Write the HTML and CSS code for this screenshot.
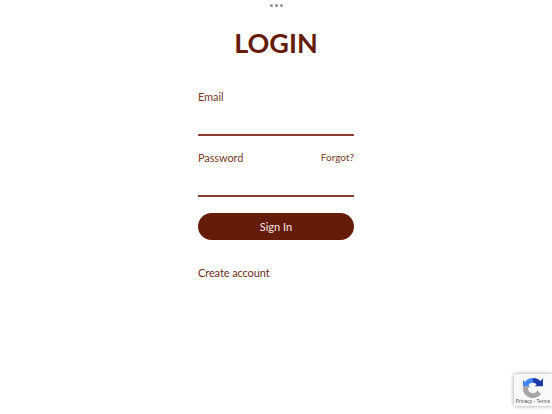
FILE: index.html
```html
<!DOCTYPE html>
<html lang="en">
<head>
<meta charset="utf-8">
<title>Login</title>
<link rel="stylesheet" href="styles.css">
</head>
<body>
<div class="dots"><span></span><span></span><span></span></div>
<main class="login">
  <h1 class="title">LOGIN</h1>
  <form class="form">
    <div class="field">
      <label class="label">Email</label>
      <div class="input"></div>
    </div>
    <div class="field field-second">
      <div class="label-row"><label class="label">Password</label><a class="forgot">Forgot?</a></div>
      <div class="input input-second"></div>
    </div>
    <div class="button">Sign In</div>
    <a class="create">Create account</a>
  </form>
</main>
<aside class="badge">
  <svg class="badge-logo" viewBox="0 0 24 24" width="20" height="20">
    <path fill="#a6a6a6" d="M0 10 L0 12.5 C0 19 5.3 24 12 24 C16 24 19.5 22.2 21.6 19.3 L17.2 14.6 C16.2 16.8 14.4 18.2 12 18.2 C8.8 18.2 6 15.6 6 12.5 L8.6 10 Z"/>
    <path fill="#4285f4" d="M12 0 C8 0 4.5 1.9 2.3 4.8 L0 2.5 L0 10 L7.7 10 L6.6 8.5 C7.6 6.8 9.5 5.8 12 5.8 Z"/>
    <path fill="#1c3aa9" d="M12 0 L12 5.8 C13.8 5.8 15.3 6.5 16.4 7.7 L14 10 L24 10 L24 0.5 L21 3.6 C18.8 1.3 15.6 0 12 0 Z"/>
  </svg>
  <div class="badge-text">Privacy - Terms</div>
</aside>
</body>
</html>
```
FILE: styles.css
```css
html, body { margin: 0; padding: 0; height: 100%; background: #fff; overflow: hidden; }
body { font-family: "Lato", "Liberation Sans", sans-serif; color: #661c0a; }
.dots { display: flex; justify-content: center; gap: 2px; padding-top: 4px; height: 3px; }
.dots span { width: 3px; height: 3px; border-radius: 50%; background: #8f8f8f; }
.login { width: 156px; margin: 0 auto; }
.title { margin: 19px 0 0; height: 34px; line-height: 34px; font-size: 27px; font-weight: 700; text-align: center; color: #661c0a; }
.form { display: flex; flex-direction: column; margin-top: 29px; }
.field { display: flex; flex-direction: column; }
.field-second { margin-top: 14px; }
.label { font-size: 11px; line-height: 16px; letter-spacing: -0.1px; color: #7a3a2a; }
.label-row { display: flex; justify-content: space-between; align-items: flex-start; }
.forgot { font-size: 10px; line-height: 14px; color: #7a3a2a; }
.input { height: 26px; margin-top: 3px; border-bottom: 2px solid #8a3b2a; }
.input-second { height: 24px; margin-top: 5px; }
.button { margin-top: 16px; height: 27px; line-height: 27px; border-radius: 14px; background: #661c0a; color: #f3e6e0; text-align: center; font-size: 11px; }
.create { margin-top: 25px; font-size: 11px; line-height: 16px; letter-spacing: -0.1px; color: #6f2c1b; }
.badge { position: fixed; left: 514px; top: 374px; width: 38px; height: 32px; background: #f9f9f9; box-shadow: 0 0 4px rgba(0,0,0,0.4); border-radius: 2px 0 0 2px; display: flex; flex-direction: column; align-items: center; }
.badge-logo { margin-top: 4px; flex: none; }
.badge-text { font-family: "Liberation Sans", sans-serif; font-size: 5px; line-height: 7px; white-space: nowrap; color: #555; }
```
